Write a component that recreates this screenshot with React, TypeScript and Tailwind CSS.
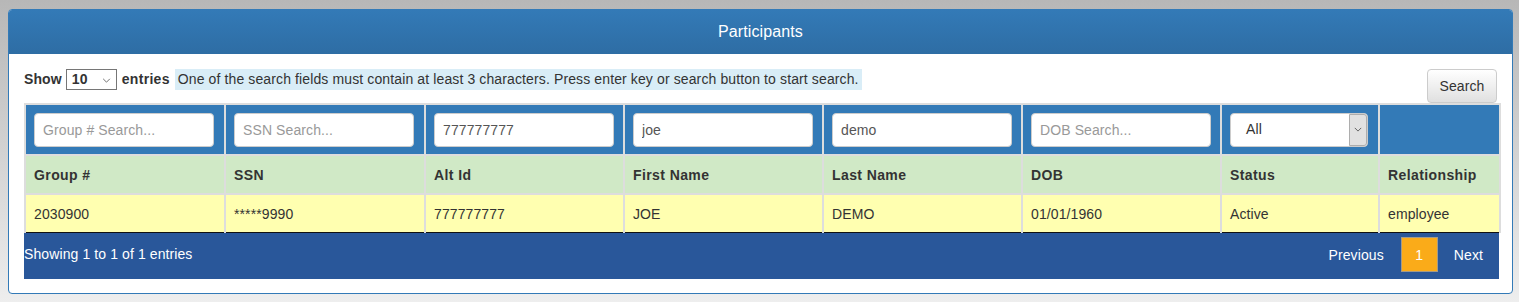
import React from 'react';

const cols = [
  { key: 'group', label: 'Group #', w: 'w-[200px]', placeholder: 'Group # Search...', value: '' },
  { key: 'ssn', label: 'SSN', w: 'w-[200px]', placeholder: 'SSN Search...', value: '' },
  { key: 'alt', label: 'Alt Id', w: 'w-[199px]', placeholder: 'Alt Id Search...', value: '777777777' },
  { key: 'first', label: 'First Name', w: 'w-[199px]', placeholder: 'First Name Search...', value: 'joe' },
  { key: 'last', label: 'Last Name', w: 'w-[199px]', placeholder: 'Last Name Search...', value: 'demo' },
  { key: 'dob', label: 'DOB', w: 'w-[199px]', placeholder: 'DOB Search...', value: '' },
];

const row = ['2030900', '*****9990', '777777777', 'JOE', 'DEMO', '01/01/1960', 'Active', 'employee'];

const Chevron = ({ className }: { className?: string }) => (
  <svg viewBox="0 0 10 6" className={className} fill="none" stroke="currentColor" strokeWidth="1">
    <path d="M1 1l4 4 4-4" />
  </svg>
);

const App = () => {
  return (
    <div className="min-h-[302px] bg-gradient-to-b from-[#b7b7b7] to-[#eeeeee] pt-[9px] pl-[8px] pr-[6px] pb-[8px] font-['Liberation_Sans',Arial,sans-serif] text-[14px] text-[#333] tracking-[0.1px]">
      <div className="rounded-[4px] border border-[#337ab7] bg-white">
        <div className="h-[44px] rounded-t-[3px] bg-gradient-to-b from-[#337ab7] to-[#2e6da4] flex items-center justify-center text-white text-[16px]">
          Participants
        </div>
        <div className="pt-[15px] pl-[15px] pr-[14px] pb-[14px]">
          <div className="flex items-start justify-between h-[34px]">
            <div className="flex items-center h-[21px] font-bold tracking-[0.3px]">
              <span className="tracking-[0.1px]">Show</span>
              <div className="relative ml-[4px] mr-[5px] w-[51px] h-[21px] border border-[#767676] flex items-center pl-[5px]">
                <span className="font-bold">10</span>
                <Chevron className="absolute right-[5px] top-[8px] w-[9px] h-[5px] text-[#555]" />
              </div>
              <span>entries</span>
              <span className="ml-[5px] bg-[#d9edf7] font-normal tracking-[0.12px] px-[3px] h-[21px] leading-[21px]">
                One of the search fields must contain at least 3 characters. Press enter key or search button to start search.
              </span>
            </div>
            <button className="h-[34px] w-[70px] mr-[1px] rounded-[4px] border border-[#ccc] bg-gradient-to-b from-white to-[#e0e0e0] text-[#333] text-[14px]">
              Search
            </button>
          </div>
          <table className="w-[1475px] border-collapse table-fixed">
            <colgroup>
              {cols.map((c) => (
                <col key={c.key} className={c.w} />
              ))}
              <col className="w-[158px]" />
              <col className="w-[121px]" />
            </colgroup>
            <tbody>
              <tr className="h-[51px] bg-[#337ab7]">
                {cols.map((c) => (
                  <td key={c.key} className="border-2 border-[#ddd] px-[8px] py-0">
                    <input
                      defaultValue={c.value}
                      placeholder={c.placeholder}
                      className="block w-[180px] h-[34px] rounded-[4px] border border-[#ccc] bg-white px-[8px] text-[14px] text-[#555] placeholder:text-[#999] outline-none"
                    />
                  </td>
                ))}
                <td className="border-2 border-[#ddd] px-[8px] py-0">
                  <div className="relative w-[138px] h-[34px] rounded-[4px] border border-[#ccc] bg-white flex items-center pl-[15px] text-[#333]">
                    All
                    <div className="absolute right-0 top-0 bottom-0 w-[18px] bg-[#e1e1e1] border border-[#adadad] rounded-r-[3px] flex items-center justify-center">
                      <Chevron className="w-[8px] h-[5px] text-[#444]" />
                    </div>
                  </div>
                </td>
                <td className="border-2 border-[#ddd]"></td>
              </tr>
              <tr className="h-[39px] bg-[#d0e9c6] font-bold tracking-[0.4px]">
                {[...cols.map((c) => c.label), 'Status', 'Relationship'].map((l) => (
                  <td key={l} className="border-2 border-[#ddd] px-[8px] pt-[2px]">
                    {l}
                  </td>
                ))}
              </tr>
              <tr className="h-[38px] bg-[#ffffb0]">
                {row.map((v, i) => (
                  <td key={i} className="border-2 border-[#ddd] border-b-[#111] border-b px-[8px] pt-[2px]">
                    {v}
                  </td>
                ))}
              </tr>
            </tbody>
          </table>
          <div className="w-[1475px] h-[46px] bg-[#29579a] flex items-start justify-between text-white">
            <div className="mt-[11px]">Showing 1 to 1 of 1 entries</div>
            <div className="flex items-center mt-[4px]">
              <span className="h-[35px] px-[16px] pt-[2px] flex items-center">Previous</span>
              <span className="h-[35px] w-[37px] ml-[1px] pt-[2px] flex items-center justify-center bg-[#faab19] border border-[#a39a88]">1</span>
              <span className="h-[35px] px-[16px] pt-[2px] flex items-center">Next</span>
            </div>
          </div>
        </div>
      </div>
    </div>
  );
};

export default App;
